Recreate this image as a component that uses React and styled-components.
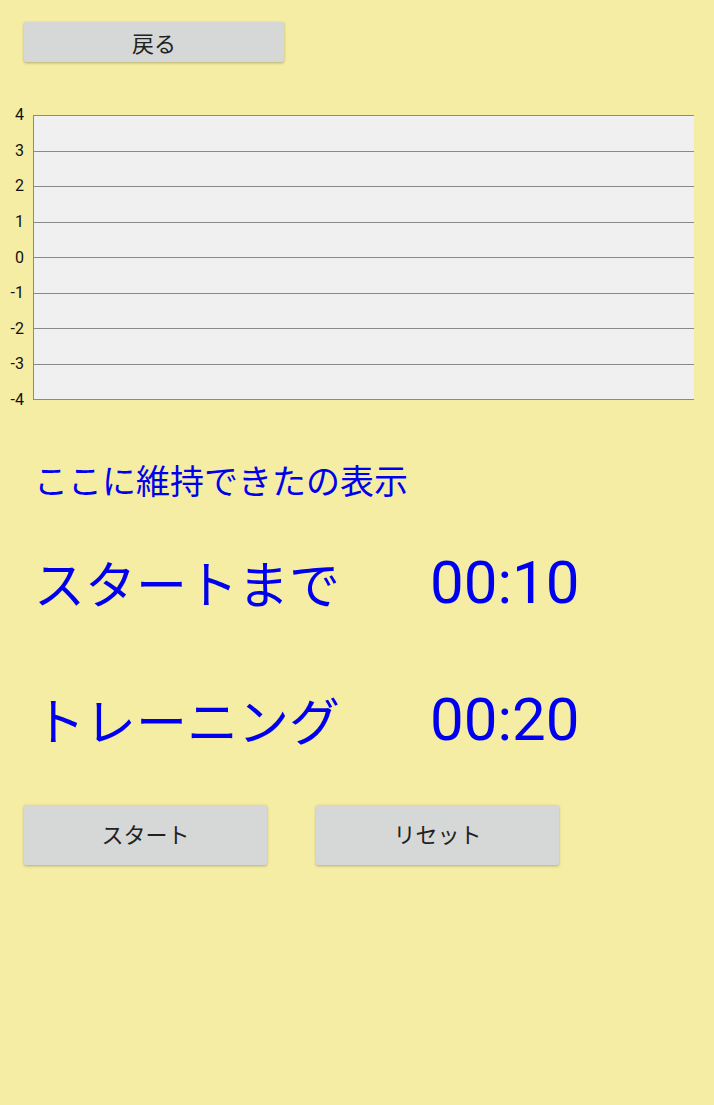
import styled, { createGlobalStyle } from "styled-components";

const GlobalStyle = createGlobalStyle`
    html, body {
        margin: 0;
        padding: 0;
        background: #f5eda3;
    }
    body {
        font-family: Roboto, "Noto Sans CJK JP", sans-serif;
    }
`;

const Page = styled.div`
    width: 714px;
    min-height: 1105px;
    box-sizing: border-box;
    padding: 22px 20px 0 24px;
    background: #f5eda3;
`;

const GrayButton = styled.button`
    display: block;
    width: ${(p) => p.$width}px;
    height: ${(p) => p.$height}px;
    border: none;
    border-radius: 2px;
    background: #d6d8d7;
    box-shadow: 0 1px 3px rgba(0, 0, 0, 0.28);
    color: #222;
    font-family: "Noto Sans CJK JP", sans-serif;
    font-size: 22px;
    line-height: 1;
    padding: 0 0 ${(p) => p.$lift || 0}px;
    cursor: pointer;
`;

const Chart = styled.div`
    display: grid;
    grid-template-columns: 9px 661px;
    margin-top: 53px;
`;

const YAxis = styled.div`
    display: flex;
    flex-direction: column;
    justify-content: space-between;
    align-items: flex-end;
    margin: -9px 0 -9px -24px;
    width: 24px;
`;

const Tick = styled.span`
    font-family: Roboto, sans-serif;
    font-size: 16px;
    line-height: 18px;
    height: 18px;
    color: #111;
`;

const Plot = styled.div`
    display: flex;
    flex-direction: column;
    height: 284px;
    background: #f0f0f0;
    border-top: 1px solid #8a8a8a;
    border-left: 1px solid #8a8a8a;
`;

const Band = styled.div`
    flex: 1;
    border-bottom: 1px solid #8a8a8a;
`;

const Status = styled.div`
    margin: 59px 0 0 10px;
    font-family: "Noto Sans CJK JP", sans-serif;
    font-size: 34px;
    line-height: 41px;
    color: #0000ee;
`;

const TimerRow = styled.div`
    display: grid;
    grid-template-columns: 396px auto;
    align-items: center;
    height: 80px;
    margin: ${(p) => p.$top}px 0 0 10px;
`;

const TimerLabel = styled.span`
    font-family: "Noto Sans CJK JP", sans-serif;
    font-size: 51px;
    line-height: 1.2;
    color: #0000ee;
    white-space: nowrap;
`;

const TimerValue = styled.span`
    font-family: Roboto, sans-serif;
    font-size: 60px;
    line-height: 1.2;
    color: #0000ee;
`;

const ButtonRow = styled.div`
    display: flex;
    gap: 49px;
    margin-top: 45px;
`;

const ticks = ["4", "3", "2", "1", "0", "-1", "-2", "-3", "-4"];

function App() {
    return (
        <Page>
            <GlobalStyle />
            <GrayButton $width={260} $height={40} $lift={0}>戻る</GrayButton>

            <Chart>
                <YAxis>
                    {ticks.map((t) => (
                        <Tick key={t}>{t}</Tick>
                    ))}
                </YAxis>
                <Plot>
                    {ticks.slice(1).map((t) => (
                        <Band key={t} />
                    ))}
                </Plot>
            </Chart>

            <Status>ここに維持できたの表示</Status>

            <TimerRow $top={43}>
                <TimerLabel>スタートまで</TimerLabel>
                <TimerValue>00:10</TimerValue>
            </TimerRow>
            <TimerRow $top={57}>
                <TimerLabel>トレーニング</TimerLabel>
                <TimerValue>00:20</TimerValue>
            </TimerRow>

            <ButtonRow>
                <GrayButton $width={243} $height={60} $lift={4}>スタート</GrayButton>
                <GrayButton $width={243} $height={60} $lift={4}>リセット</GrayButton>
            </ButtonRow>
        </Page>
    );
}

export default App;
